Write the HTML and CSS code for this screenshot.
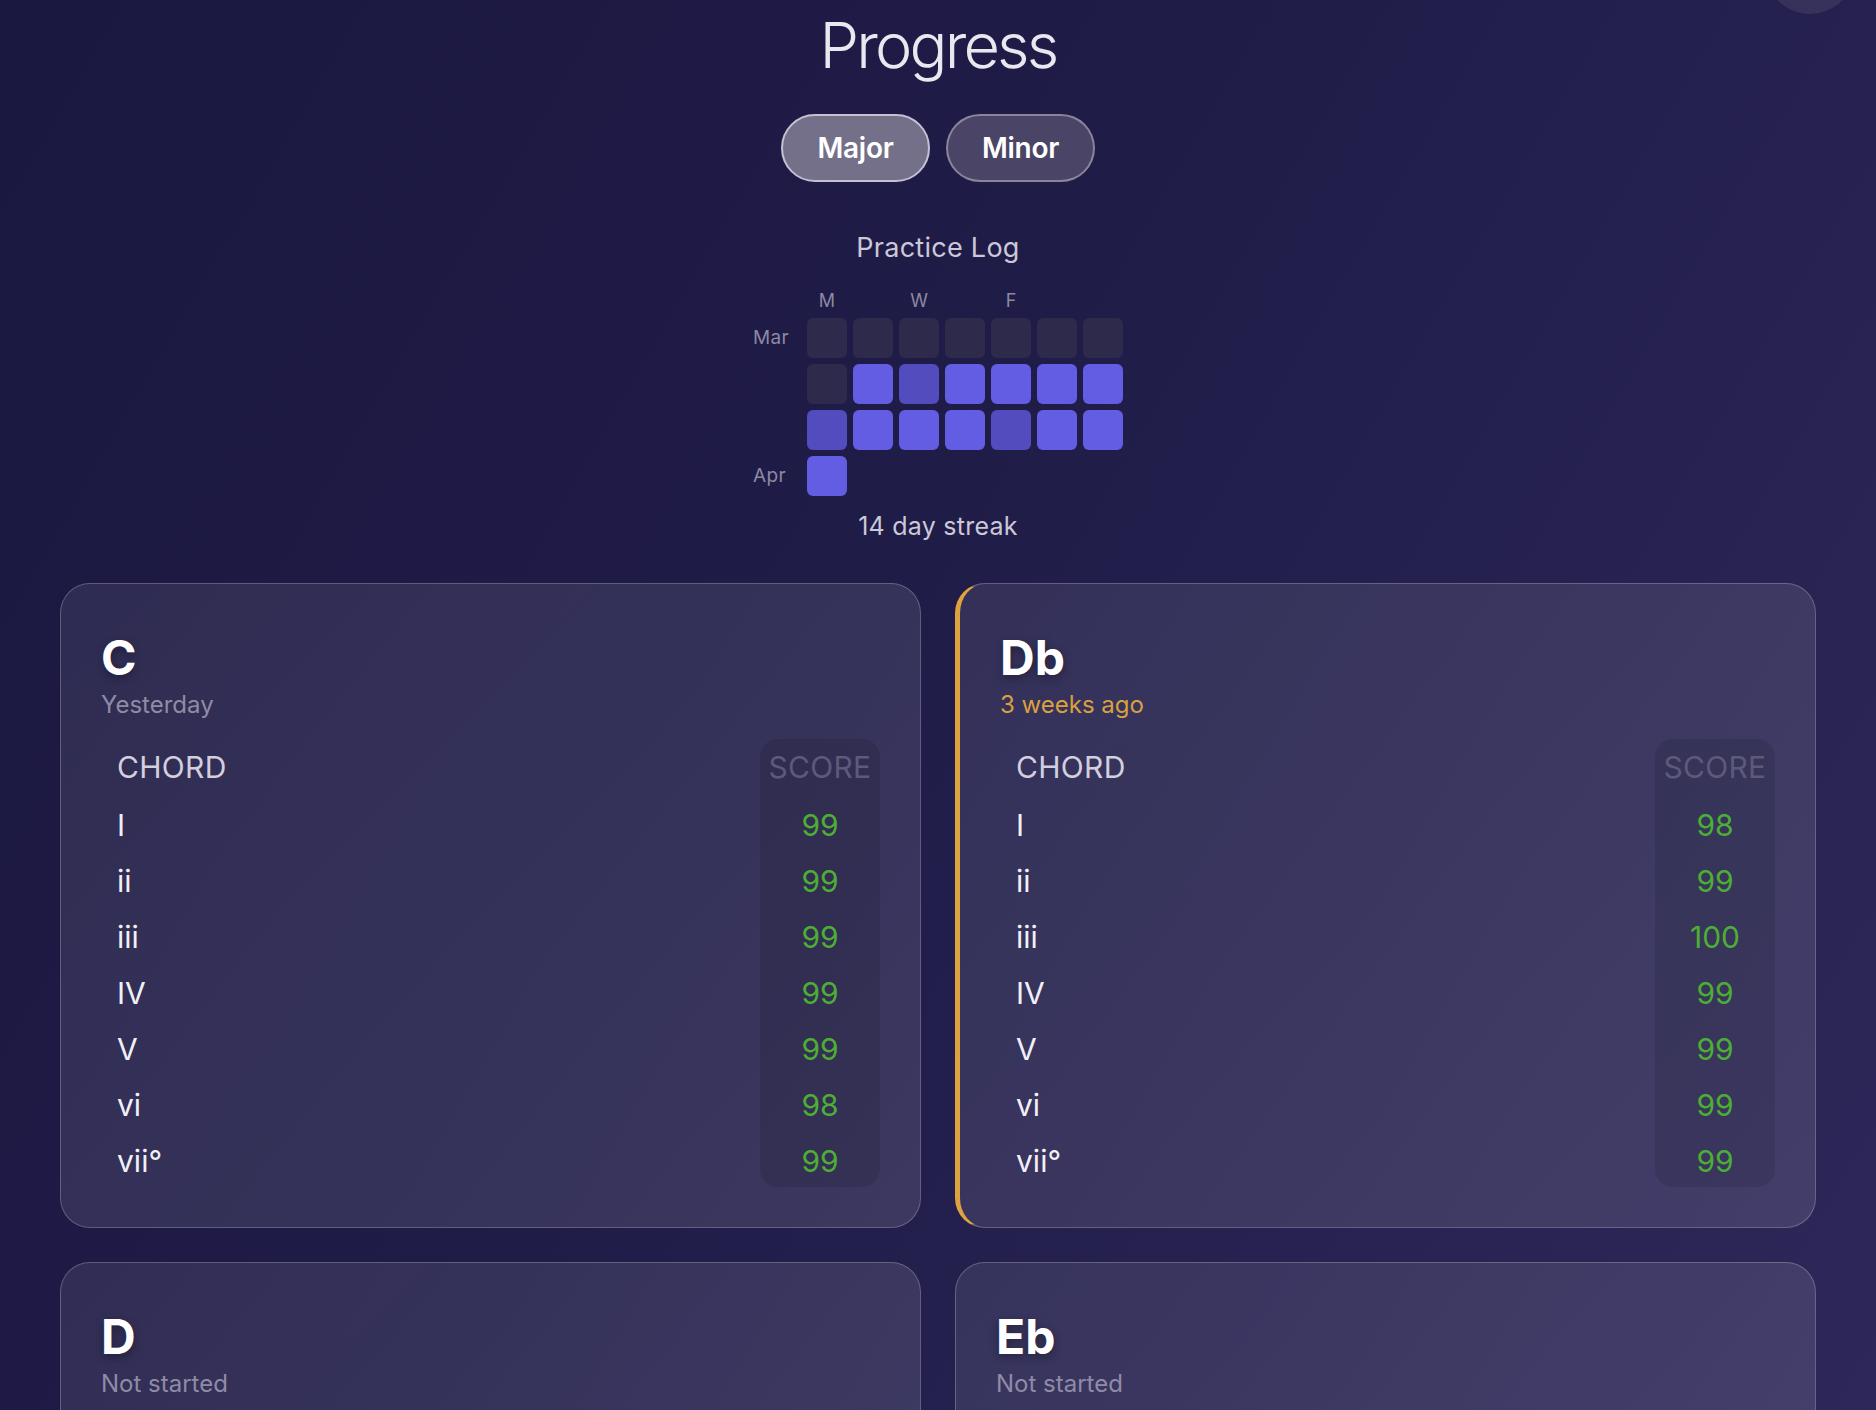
FILE: index.html
```html
<!DOCTYPE html>
<html lang="en">
<head>
	<meta charset="UTF-8">
	<title>Progress</title>
	<link rel="stylesheet" href="styles.css">
</head>
<body>
	<div class="corner_btn"></div>

	<header class="top">
		<h1>Progress</h1>
		<div class="tabs">
			<button class="tab current">Major</button>
			<button class="tab">Minor</button>
		</div>
	</header>

	<section class="log">
		<h3>Practice Log</h3>
		<div class="heatmap">
			<span></span><span class="day">M</span><span></span><span class="day">W</span><span></span><span class="day">F</span><span></span><span></span>

			<span class="month">Mar</span>
			<i></i><i></i><i></i><i></i><i></i><i></i><i></i>

			<span></span>
			<i></i><i class="on"></i><i class="mid"></i><i class="on"></i><i class="on"></i><i class="on"></i><i class="on"></i>

			<span></span>
			<i class="mid"></i><i class="on"></i><i class="on"></i><i class="on"></i><i class="mid"></i><i class="on"></i><i class="on"></i>

			<span class="month">Apr</span>
			<i class="on"></i>
		</div>
		<p class="streak">14 day streak</p>
	</section>

	<main class="cards">
		<div class="card">
			<h2>C</h2>
			<p class="when">Yesterday</p>
			<table>
				<tr><th>CHORD</th><th class="score">SCORE</th></tr>
				<tr><td>I</td><td class="score">99</td></tr>
				<tr><td>ii</td><td class="score">99</td></tr>
				<tr><td>iii</td><td class="score">99</td></tr>
				<tr><td>IV</td><td class="score">99</td></tr>
				<tr><td>V</td><td class="score">99</td></tr>
				<tr><td>vi</td><td class="score">98</td></tr>
				<tr><td>vii°</td><td class="score">99</td></tr>
			</table>
		</div>

		<div class="card stale">
			<h2>Db</h2>
			<p class="when">3 weeks ago</p>
			<table>
				<tr><th>CHORD</th><th class="score">SCORE</th></tr>
				<tr><td>I</td><td class="score">98</td></tr>
				<tr><td>ii</td><td class="score">99</td></tr>
				<tr><td>iii</td><td class="score">100</td></tr>
				<tr><td>IV</td><td class="score">99</td></tr>
				<tr><td>V</td><td class="score">99</td></tr>
				<tr><td>vi</td><td class="score">99</td></tr>
				<tr><td>vii°</td><td class="score">99</td></tr>
			</table>
		</div>

		<div class="card">
			<h2>D</h2>
			<p class="when">Not started</p>
		</div>

		<div class="card">
			<h2>Eb</h2>
			<p class="when">Not started</p>
		</div>
	</main>
</body>
</html>
```

FILE: styles.css
```css
html{
	background: #1c1940;
}
body{
	margin: 0;
	min-height: 1410px;
	font-family: Inter, "Noto Sans", sans-serif;
	color: #f2f0f7;
	background: linear-gradient(120deg, #1a1740 0%, #201c48 45%, #2d2859 100%);
	position: relative;
	overflow: hidden;
}

/* round button cut off at the top right */
.corner_btn{
	position: absolute;
	top: -76px;
	right: 21px;
	width: 90px;
	height: 90px;
	border-radius: 50%;
	background: rgba(255,255,255,0.08);
}

.top{
	padding-top: 7px;
	text-align: center;
}
.top h1{
	margin: 0;
	font-size: 63px;
	font-weight: 300;
	line-height: 77px;
	letter-spacing: -0.045em;
	color: #e9e7f0;
}
.tabs{
	display: flex;
	justify-content: center;
	gap: 16px;
	margin-top: 30px;
}
.tab{
	width: 149px;
	height: 68px;
	border-radius: 34px;
	border: 2px solid rgba(255,255,255,0.35);
	background: #4a4566;
	color: #fff;
	font-family: inherit;
	font-size: 28px;
	font-weight: 600;
	letter-spacing: -0.01em;
	cursor: pointer;
}
.tab.current{
	background: #757089;
	border-color: #c4c1d1;
}

.log{
	margin-top: 50px;
	text-align: center;
}
.log h3{
	margin: 0;
	font-size: 27px;
	font-weight: 400;
	line-height: 31px;
	letter-spacing: 0.01em;
	color: #cbc8d8;
}
.heatmap{
	display: grid;
	grid-template-columns: 48px repeat(7, 40px);
	grid-template-rows: 22px repeat(4, 40px);
	gap: 6px;
	width: 370px;
	margin: 27px auto 0;
}
.heatmap .day{
	font-size: 18px;
	line-height: 22px;
	color: #8d89a3;
}
.heatmap .month{
	font-size: 19px;
	line-height: 40px;
	letter-spacing: 0.02em;
	text-align: left;
	color: #8d89a3;
}
.heatmap i{
	display: block;
	border-radius: 6px;
	background: #2e2a4b;
}
.heatmap i.on{
	background: #625de3;
}
.heatmap i.mid{
	background: #524cbf;
}
.streak{
	margin: 16px 0 0;
	font-size: 25px;
	line-height: 29px;
	letter-spacing: 0.01em;
	color: #cbc8d8;
}

.cards{
	display: grid;
	grid-template-columns: 1fr 1fr;
	gap: 34px;
	padding: 42px 60px 0;
}
.card{
	padding: 40px;
	border: 1px solid rgba(255,255,255,0.22);
	border-radius: 30px;
	background: linear-gradient(135deg, rgba(255,255,255,0.085), rgba(255,255,255,0.115));
}
.card.stale{
	border-left: 5px solid #dea23f;
}
.card h2{
	margin: 0;
	font-size: 48px;
	font-weight: 700;
	line-height: 1.4;
	color: #fff;
	text-shadow: 0 3px 8px rgba(0,0,0,0.35);
}
.card .when{
	margin: 0;
	font-size: 24px;
	line-height: 1.2;
	color: #8f8ba6;
}
.card.stale .when{
	color: #d9a040;
}

table{
	width: 100%;
	margin-top: 19px;
	border-collapse: separate;
	border-spacing: 0;
	font-size: 30px;
}
th, td{
	height: 56px;
	padding: 0 16px;
	text-align: left;
	font-weight: 400;
}
th{
	color: #d2cfdf;
	letter-spacing: 0.01em;
}
td{
	height: 51px;
	padding-top: 5px;
	color: #f2f0f7;
}
.score{
	width: 120px;
	padding-left: 0;
	padding-right: 0;
	text-align: center;
	background: rgba(0,0,0,0.1);
	color: #4cae34;
}
th.score{
	color: #5e5979;
	border-radius: 18px 18px 0 0;
}
tr:last-child .score{
	border-radius: 0 0 18px 18px;
}
```
